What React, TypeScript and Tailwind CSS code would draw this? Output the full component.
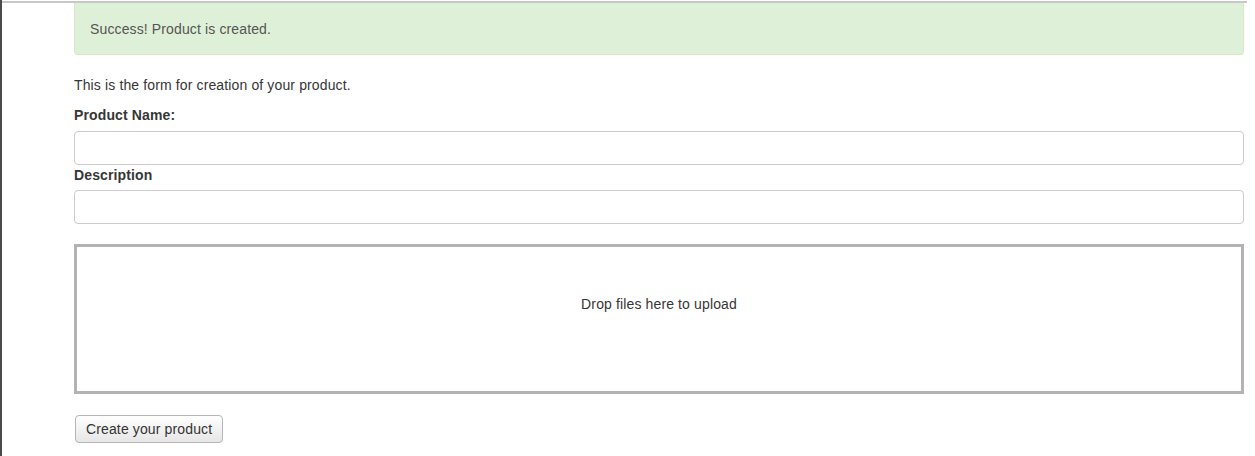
export default function App() {
  return (
    <div className="h-[456px] w-[1255px] overflow-hidden bg-white font-['Liberation_Sans',Arial,sans-serif] text-[14px] leading-5 tracking-[0.13px] text-[#363636]">
      <div className="flex h-full">
        <div className="h-full w-[2px] shrink-0 bg-[#4a4a4a]" />
        <div className="flex h-full flex-1 flex-col">
          <div className="mt-[1px] h-[2px] w-[1245px] bg-[#c8c8c8]" />
          <div className="ml-[72px] w-[1170px]">
            <div className="h-[52px] rounded-b border border-t-0 border-[#d6e9c6] bg-[#dff0d8] px-[15px] pt-[16px] text-[#555]">
              Success! Product is created.
            </div>
            <p className="mt-5 mb-[10px]">This is the form for creation of your product.</p>
            <label className="block font-bold">Product Name:</label>
            <input
              type="text"
              className="mt-[6px] block h-[34px] w-full rounded border border-[#ccc] bg-white px-3"
            />
            <label className="block font-bold">Description</label>
            <input
              type="text"
              className="mt-[5px] block h-[34px] w-full rounded border border-[#ccc] bg-white px-3"
            />
            <div className="mt-5 flex h-[150px] w-full items-center justify-center border-[3px] border-[#b3b3b3] bg-white">
              <span className="-mt-[30px]">Drop files here to upload</span>
            </div>
            <button className="mt-[21px] ml-[1px] h-[28px] rounded border border-[#b5b5b5] bg-gradient-to-b from-white to-[#e6e6e6] px-[10px] text-[14px] leading-5 tracking-[0.13px] text-[#333]">
              Create your product
            </button>
          </div>
        </div>
      </div>
    </div>
  );
}
